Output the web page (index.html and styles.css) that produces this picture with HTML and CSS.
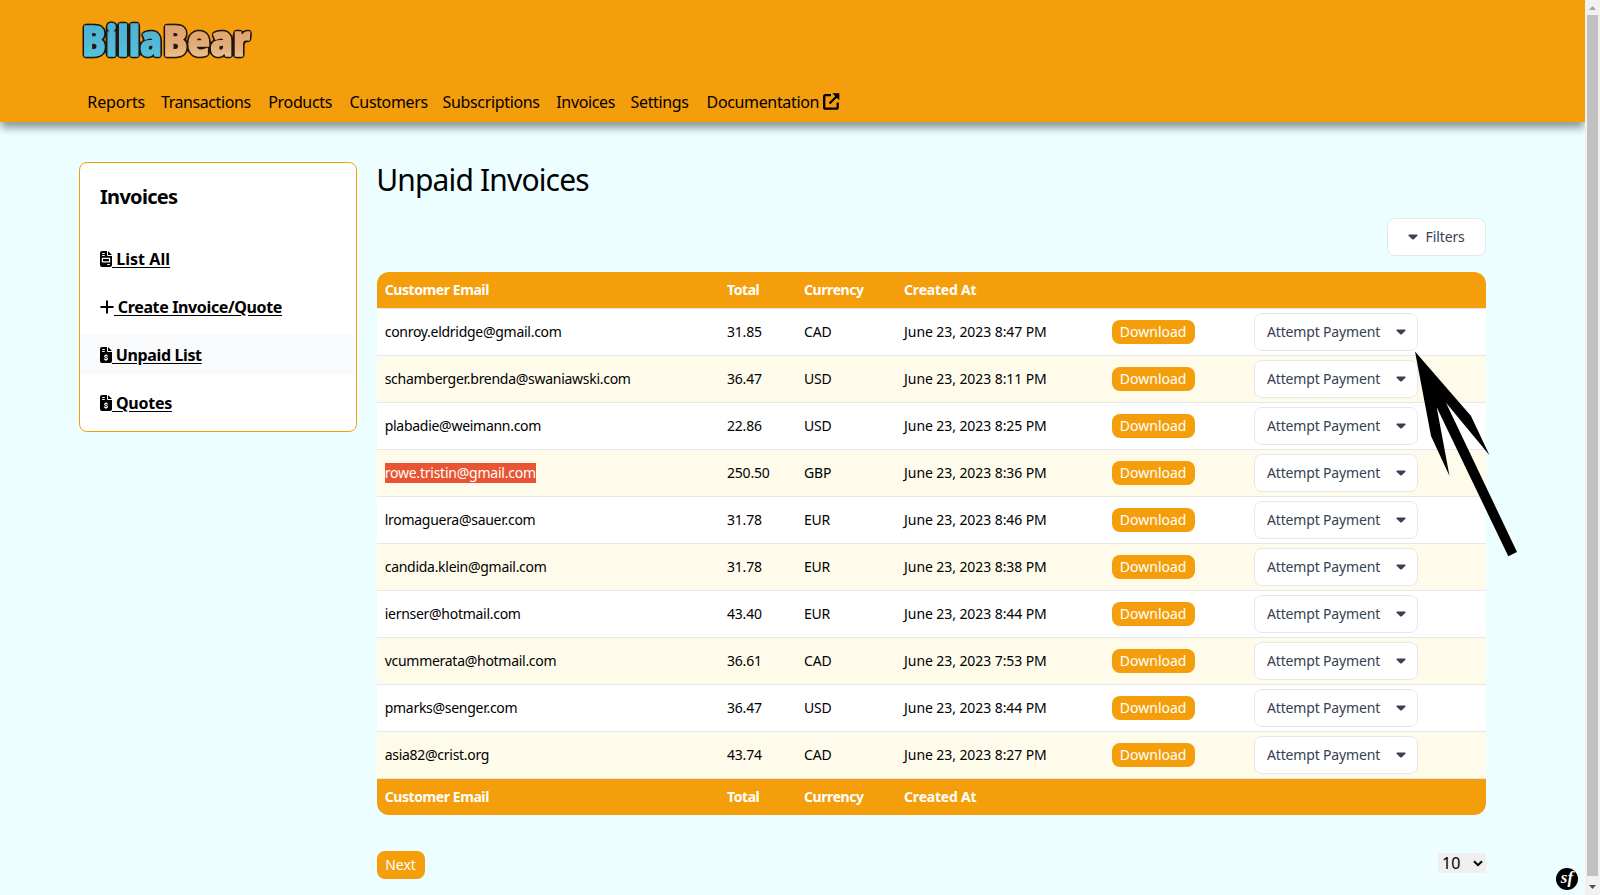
FILE: index.html
```html
<!DOCTYPE html>
<html lang="en">
<head>
<meta charset="utf-8">
<title>BillaBear - Unpaid Invoices</title>
<link rel="stylesheet" href="styles.css">
</head>
<body>
<svg class="defs" width="0" height="0" aria-hidden="true">
  <defs>
    <linearGradient id="blue" x1="0" y1="0" x2="0" y2="1"><stop offset="0" stop-color="#46afcf"/><stop offset=".6" stop-color="#55b9d6"/><stop offset="1" stop-color="#4fd0e0"/></linearGradient>
    <linearGradient id="tan" x1="0" y1="0" x2="0" y2="1"><stop offset="0" stop-color="#dd9f68"/><stop offset=".6" stop-color="#e3ab76"/><stop offset="1" stop-color="#f3d49a"/></linearGradient>
    <symbol id="caret" viewBox="0 0 10 6"><path d="M1.200.4h7.600c.8 0 1.100.8.6 1.300L5.800 5.200c-.5.5-1.100.5-1.600 0L.6 1.700C.1 1.200.4.4 1.200.4z"/></symbol>
    <symbol id="file-lines" viewBox="0 0 384 512"><path fill-rule="evenodd" d="M64 0C29 0 0 29 0 64v384c0 35 29 64 64 64h256c35 0 64-29 64-64V160H256c-18 0-32-14-32-32V0zM256 0v128h128zM80 64h64c9 0 16 7 16 16s-7 16-16 16H80c-9 0-16-7-16-16s7-16 16-16zm0 64h64c9 0 16 7 16 16s-7 16-16 16H80c-9 0-16-7-16-16s7-16 16-16zm-4 88h232c12 0 20 8 20 20v112c0 12-8 20-20 20H76c-12 0-20-8-20-20V236c0-12 8-20 20-20zm20 40v72h192v-72zm144 160h64c9 0 16 7 16 16s-7 16-16 16h-64c-9 0-16-7-16-16s7-16 16-16z"/></symbol>
    <symbol id="file-dollar" viewBox="0 0 384 512"><path fill-rule="evenodd" d="M64 0C29 0 0 29 0 64v384c0 35 29 64 64 64h256c35 0 64-29 64-64V160H256c-18 0-32-14-32-32V0zM256 0v128h128zM64 80c0-9 7-16 16-16h64c9 0 16 7 16 16s-7 16-16 16H80c-9 0-16-7-16-16zm0 64c0-9 7-16 16-16h64c9 0 16 7 16 16s-7 16-16 16H80c-9 0-16-7-16-16z"/><path d="M245 286c-25-13-92-25-97 15-5 46 94 21 92 70-3 41-70 36-101 14M192 240v38m0 118v38" fill="none" stroke="#fff" stroke-width="36" stroke-linecap="round"/></symbol>
    <symbol id="plus" viewBox="0 0 14 14"><path d="M7 1.200v11.600M1.200 7h11.600" fill="none" stroke="#000" stroke-width="2" stroke-linecap="round"/></symbol>
  </defs>
</svg>
<div class="page">
  <header class="header">
    <svg class="logo" width="180" height="48" viewBox="76 18 180 48" role="img" aria-label="BillaBear">
      <defs>
        <filter id="chunky" filterUnits="userSpaceOnUse" x="72" y="12" width="190" height="56" color-interpolation-filters="sRGB">
          <feGaussianBlur in="SourceAlpha" stdDeviation="1.500" result="blur"/>
          <feComponentTransfer in="blur" result="rim"><feFuncA type="linear" slope="7" intercept="-.5"/></feComponentTransfer>
          <feFlood flood-color="#20150f"/>
          <feComposite in2="rim" operator="in" result="edge"/>
          <feMerge><feMergeNode in="edge"/><feMergeNode in="SourceGraphic"/></feMerge>
        </filter>
      </defs>
      <text x="82" y="56" textLength="80" lengthAdjust="spacingAndGlyphs" fill="url(#blue)" stroke="url(#blue)" filter="url(#chunky)">Billa</text>
      <text x="163" y="56" textLength="87" lengthAdjust="spacingAndGlyphs" fill="url(#tan)" stroke="url(#tan)" filter="url(#chunky)">Bear</text>
    </svg>
    <nav class="nav">
      <a class="n1">Reports</a><a class="n2">Transactions</a><a>Products</a><a>Customers</a><a>Subscriptions</a><a>Invoices</a><a>Settings</a>
      <a>Documentation</a>
      <svg class="ext" width="17" height="17" viewBox="0 0 17 17"><path d="M8 2.200H2.600Q1.200 2.200 1.200 3.600v10.600q0 1.500 1.400 1.500h10.600q1.500 0 1.500-1.500V9.500M6.500 10.500 14 3" fill="none" stroke="#000" stroke-width="2.300"/><path d="M9.300.200h7v7z"/></svg>
    </nav>
  </header>
  <div class="body">
    <aside class="side">
      <h2>Invoices</h2>
      <a class="link"><svg width="12" height="16"><use href="#file-lines"/></svg><span class="u w1">&nbsp;List All</span></a>
      <a class="link"><svg width="14" height="14"><use href="#plus"/></svg><span class="u w2">&nbsp;Create Invoice/Quote</span></a>
      <a class="link active"><svg width="12" height="16"><use href="#file-dollar"/></svg><span class="u w3">&nbsp;Unpaid List</span></a>
      <a class="link"><svg width="12" height="16"><use href="#file-dollar"/></svg><span class="u w4">&nbsp;Quotes</span></a>
    </aside>
    <main class="main">
      <h1>Unpaid Invoices</h1>
      <div class="tools"><button class="filters"><svg width="10" height="6"><use href="#caret"/></svg>Filters</button></div>
      <div class="table">
        <div class="row head"><b>Customer Email</b><b>Total</b><b>Currency</b><b class="date">Created At</b></div>
        <div class="rows" id="rows"></div>
        <div class="row head foot"><b>Customer Email</b><b>Total</b><b>Currency</b><b class="date">Created At</b></div>
      </div>
      <div class="pager"><button class="next">Next</button>
        <div class="size">10<svg width="10" height="7" viewBox="0 0 10 7"><path d="M1 1.200 5 5.200l4-4" fill="none" stroke="#000" stroke-width="2"/></svg></div>
      </div>
    </main>
  </div>
</div>
<div class="scroll"><svg width="15" height="15"><path d="M4 10h7L7.500 6z" fill="#a3a3a3"/></svg><div class="thumb"></div><svg width="15" height="19"><path d="M4 9h7L7.500 13z" fill="#505050"/></svg></div>
<svg class="arrow" width="110" height="210" viewBox="1412 350 110 210"><path d="M1415 351.500 1471 416 1489.500 455.300 1446 402.700 1517 552 1508.300 556.300 1436.700 407.300 1449.500 476 1431 436z"/></svg>
<div class="sf"><i>sf</i></div>
<script src="app.js"></script>
</body>
</html>
```
FILE: styles.css
```css
* { box-sizing: border-box; }
body { margin: 0; height: 895px; overflow: hidden; display: flex; background: #ecfeff; color: #000; font-family: "Noto Sans", sans-serif; font-size: 16px; line-height: 24px; }
.defs { position: absolute; }
.page { width: 1585px; overflow: hidden; }
.header { height: 122px; background: #f59e0b; padding: 18px 0 0 76px; box-shadow: 0 7px 8px -1px rgba(0, 0, 0, .4); }
.logo { display: block; overflow: visible; }
.logo text { font-family: "Open Sans", sans-serif; font-weight: 800; font-size: 42px; stroke-width: 1.5px; stroke-linejoin: round; }
.nav { margin: 24px 0 0 11.300px; display: grid; grid-template-columns: 73.700px 107.300px 81.300px 93px 113.700px 74.300px 76px 116.300px 20px; white-space: nowrap; letter-spacing: -.35px; }
.n1 { letter-spacing: -.1px; }
.n2 { letter-spacing: -.42px; }
.ext { margin-top: 3px; }
.body { display: flex; padding: 40px 99px 0 79px; gap: 20px; }
.side { width: 278px; height: 270px; background: #fff; border: 1px solid #f59e0b; border-radius: 8px; }
.side h2 { margin: 20px 0 28px 20px; font-size: 20px; line-height: 28px; font-weight: 700; letter-spacing: -.7px; }
.link { display: flex; align-items: center; height: 40px; padding-left: 20px; margin-bottom: 8px; font-weight: 700; white-space: nowrap; }
.active { background: #f9fafb; }
.u { text-decoration: underline; text-underline-offset: 2px; }
.w1 { letter-spacing: .05px; }
.w2 { letter-spacing: -.36px; }
.w3 { letter-spacing: -.37px; }
.w4 { letter-spacing: -.25px; }
.main { width: 1109px; }
h1 { margin: 0 0 0 -.8px; font-size: 30px; line-height: 36px; font-weight: 400; letter-spacing: -.85px; }
.tools { display: flex; justify-content: flex-end; margin-top: 20px; }
button { font: inherit; border: 0; padding: 0; }
.filters { display: flex; align-items: center; gap: 7.500px; width: 99px; height: 38px; padding-left: 20px; background: #fff; border: 1px solid #e5e7eb; border-radius: 8px; font-size: 14px; color: #374151; fill: #374151; letter-spacing: -.1px; }
.table { margin-top: 16px; border-radius: 12px; overflow: hidden; font-size: 14px; line-height: 20px; }
.row { display: grid; grid-template-columns: 342.300px 77px 99.500px 208.200px 142.300px 1fr; align-items: center; height: 47px; padding-left: 7.700px; background: #fff; border-top: 1px solid #e5e7eb; white-space: nowrap; letter-spacing: -.2px; }
.email, .mark { letter-spacing: -.28px; }
.date { padding-left: .6px; letter-spacing: -.08px; }
.rows { border-bottom: 1px solid #e5e7eb; }
.rows .row:nth-child(even) { background: #fffbeb; }
.row.head { height: 36px; border: 0; background: #f59e0b; color: #fff; }
.row b { font-weight: 700; letter-spacing: -.42px; }
.row b.date { letter-spacing: -.2px; }
.mark { display: inline-block; height: 20px; background: #e95532; color: #fff; letter-spacing: -.23px; }
.dl { width: 83px; height: 24px; border-radius: 8px; background: #f59e0b; color: #fff; letter-spacing: 0; }
.pay { display: flex; align-items: center; justify-content: space-between; width: 164px; height: 38px; padding: 0 11px 0 12px; background: #fff; border: 1px solid #e5e7eb; border-radius: 8px; color: #374151; fill: #374151; letter-spacing: -.16px; }
.pager { display: flex; justify-content: space-between; margin-top: 36px; }
.next { width: 48px; height: 28px; padding-right: 1px; border-radius: 8px; background: #f59e0b; color: #fff; font-size: 14px; }
.size { display: flex; align-items: center; justify-content: space-between; width: 48px; height: 20px; margin-top: 2px; padding: 0 3px 0 4px; background: #efefef; }
.scroll { width: 15px; height: 895px; background: #f1f1f1; display: flex; flex-direction: column; }
.scroll svg { display: block; }
.thumb { width: 11px; height: 861px; margin-left: 2px; background: #c1c1c1; }
.arrow { position: absolute; left: 1412px; top: 350px; }
.sf { position: absolute; left: 1556px; top: 868px; width: 22px; height: 22px; border-radius: 50%; background: #000; color: #fff; text-align: center; font: bold 17px/19px "Liberation Serif", serif; }
```
FILE: app.js
```js
const invoices = [
  ["conroy.eldridge@gmail.com", "31.85", "CAD", "8:47"],
  ["schamberger.brenda@swaniawski.com", "36.47", "USD", "8:11"],
  ["plabadie@weimann.com", "22.86", "USD", "8:25"],
  ["rowe.tristin@gmail.com", "250.50", "GBP", "8:36", true],
  ["lromaguera@sauer.com", "31.78", "EUR", "8:46"],
  ["candida.klein@gmail.com", "31.78", "EUR", "8:38"],
  ["iernser@hotmail.com", "43.40", "EUR", "8:44"],
  ["vcummerata@hotmail.com", "36.61", "CAD", "7:53"],
  ["pmarks@senger.com", "36.47", "USD", "8:44"],
  ["asia82@crist.org", "43.74", "CAD", "8:27"],
];
document.getElementById("rows").innerHTML = invoices.map(([email, total, currency, time, marked]) =>
  `<div class="row"><div><span class="${marked ? "mark" : "email"}">${email}</span></div><div>${total}</div><div>${currency}</div><div class="date">June 23, 2023 ${time} PM</div><div><button class="dl">Download</button></div><button class="pay">Attempt Payment<svg width="10" height="6"><use href="#caret"/></svg></button></div>`
).join("");
```
